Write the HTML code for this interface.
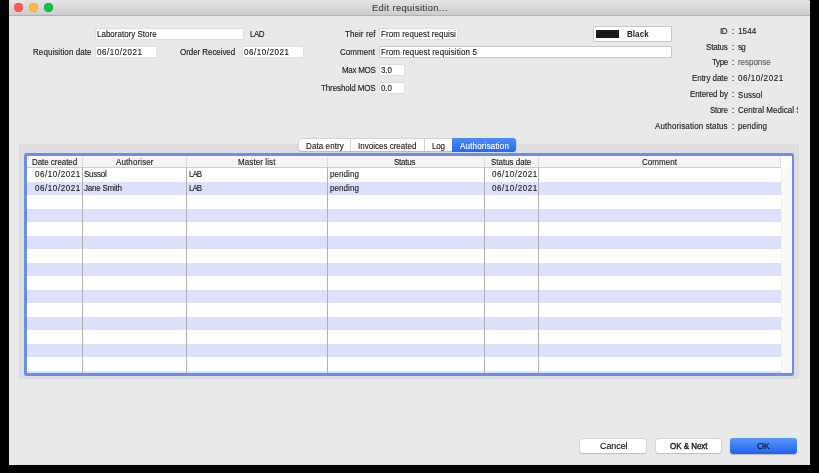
<!DOCTYPE html>
<html>
<head>
<meta charset="utf-8">
<title>Edit requisition...</title>
<style>
html,body{margin:0;padding:0;background:#000;}
body{width:819px;height:473px;overflow:hidden;position:relative;font-family:"Liberation Sans",sans-serif;}
.b{position:absolute;}
.t{position:absolute;white-space:nowrap;line-height:12px;transform:scaleY(1.09);-webkit-text-stroke:0.13px;will-change:transform;}
</style>
</head>
<body>
<div class="b" style="left:9.00px;top:0.00px;width:801.00px;height:465.00px;background:#e9e9e9;border-radius:0 1.5px 0 0;"></div>
<div class="b" style="left:9.00px;top:0.00px;width:801.00px;height:15.20px;background:linear-gradient(#e4e4e4,#cdcdcd);border-radius:0 1.5px 0 0;"></div>
<div class="b" style="left:9.00px;top:15.20px;width:801.00px;height:0.80px;background:#b1b1b1;"></div>
<div class="b" style="left:14.20px;top:3.20px;width:8.80px;height:8.80px;background:#fc5b57;border-radius:50%;box-shadow:inset 0 0 0 0.5px #e2443f;"></div>
<div class="b" style="left:29.30px;top:3.20px;width:8.80px;height:8.80px;background:#fdbc40;border-radius:50%;box-shadow:inset 0 0 0 0.5px #e0a028;"></div>
<div class="b" style="left:44.20px;top:3.20px;width:8.80px;height:8.80px;background:#0cc446;border-radius:50%;box-shadow:inset 0 0 0 0.5px #0aa838;"></div>
<span class="t" style="left:371.70px;top:2.08px;font-size:9.3px;letter-spacing:0.363px;color:#3d3d3d;transform-origin:0 9.22px;transform:scaleY(1.04);">Edit requisition...</span>
<div class="b" style="left:95.80px;top:29.10px;width:147.40px;height:9.80px;background:#fff;box-shadow:0 0 0 0.6px #d9d9d9;"></div>
<div class="b" style="left:95.80px;top:46.70px;width:60.20px;height:10.20px;background:#fff;box-shadow:0 0 0 0.6px #d9d9d9;"></div>
<div class="b" style="left:242.60px;top:46.70px;width:60.70px;height:10.20px;background:#fff;box-shadow:0 0 0 0.6px #d9d9d9;"></div>
<div class="b" style="left:379.90px;top:29.10px;width:77.30px;height:9.80px;background:#fff;box-shadow:0 0 0 0.6px #d9d9d9;"></div>
<div class="b" style="left:379.60px;top:46.90px;width:291.10px;height:10.30px;background:#fff;box-shadow:0 0 0 0.7px #b9b9b9;"></div>
<div class="b" style="left:379.90px;top:65.00px;width:24.30px;height:9.80px;background:#fff;box-shadow:0 0 0 0.6px #d9d9d9;"></div>
<div class="b" style="left:379.90px;top:83.00px;width:24.30px;height:9.70px;background:#fff;box-shadow:0 0 0 0.6px #d9d9d9;"></div>
<div class="b" style="left:593.70px;top:26.90px;width:77.00px;height:13.80px;background:#fff;box-shadow:0 0 0 0.7px #b9b9b9;"></div>
<div class="b" style="left:596.20px;top:30.10px;width:22.40px;height:7.70px;background:#1b1b1b;"></div>
<span class="t" style="left:96.80px;top:28.93px;font-size:8.0px;letter-spacing:0.000px;color:#1c1c1c;transform-origin:0 8.77px;">Laboratory Store</span>
<span class="t" style="left:250.40px;top:28.93px;font-size:8.0px;letter-spacing:-0.480px;color:#1c1c1c;transform-origin:0 8.77px;">LAD</span>
<span class="t" style="left:33.20px;top:46.93px;font-size:8.0px;letter-spacing:0.076px;color:#1c1c1c;transform-origin:0 8.77px;">Requisition date</span>
<span class="t" style="left:96.80px;top:46.93px;font-size:8.0px;letter-spacing:0.540px;color:#1c1c1c;transform-origin:0 8.77px;">06/10/2021</span>
<span class="t" style="left:180.20px;top:46.93px;font-size:8.0px;letter-spacing:-0.065px;color:#1c1c1c;transform-origin:0 8.77px;">Order Received</span>
<span class="t" style="left:244.00px;top:46.93px;font-size:8.0px;letter-spacing:0.551px;color:#1c1c1c;transform-origin:0 8.77px;">06/10/2021</span>
<span class="t" style="left:345.00px;top:28.93px;font-size:8.0px;letter-spacing:0.075px;color:#1c1c1c;transform-origin:0 8.77px;">Their ref</span>
<span class="t" style="left:381.30px;top:28.93px;font-size:8.0px;letter-spacing:0.076px;color:#1c1c1c;transform-origin:0 8.77px;">From request requisi</span>
<span class="t" style="left:340.30px;top:46.93px;font-size:8.0px;letter-spacing:0.070px;color:#1c1c1c;transform-origin:0 8.77px;">Comment</span>
<span class="t" style="left:381.30px;top:46.93px;font-size:8.0px;letter-spacing:0.119px;color:#1c1c1c;transform-origin:0 8.77px;">From request requisition 5</span>
<span class="t" style="left:341.60px;top:64.73px;font-size:8.0px;letter-spacing:-0.293px;color:#1c1c1c;transform-origin:0 8.77px;">Max MOS</span>
<span class="t" style="left:381.30px;top:64.73px;font-size:8.0px;letter-spacing:-0.110px;color:#1c1c1c;transform-origin:0 8.77px;">3.0</span>
<span class="t" style="left:320.70px;top:82.83px;font-size:8.0px;letter-spacing:-0.112px;color:#1c1c1c;transform-origin:0 8.77px;">Threshold MOS</span>
<span class="t" style="left:381.30px;top:82.83px;font-size:8.0px;letter-spacing:-0.110px;color:#1c1c1c;transform-origin:0 8.77px;">0.0</span>
<span class="t" style="left:627.40px;top:28.63px;font-size:8.0px;letter-spacing:0.060px;color:#1c1c1c;transform-origin:0 8.77px;font-weight:bold;transform:scaleY(1.07);-webkit-text-stroke:0px;">Black</span>
<span class="t" style="left:720.30px;top:26.23px;font-size:8.0px;letter-spacing:-0.400px;color:#1c1c1c;transform-origin:0 8.77px;">ID</span>
<span class="t" style="left:731.90px;top:26.23px;font-size:8.0px;letter-spacing:0.000px;color:#1c1c1c;transform-origin:0 8.77px;">:</span>
<span class="t" style="left:737.60px;top:26.23px;font-size:8.0px;letter-spacing:0.167px;color:#1c1c1c;transform-origin:0 8.77px;">1544</span>
<span class="t" style="left:706.20px;top:41.93px;font-size:8.0px;letter-spacing:-0.196px;color:#1c1c1c;transform-origin:0 8.77px;">Status</span>
<span class="t" style="left:731.90px;top:41.93px;font-size:8.0px;letter-spacing:0.000px;color:#1c1c1c;transform-origin:0 8.77px;">:</span>
<span class="t" style="left:737.60px;top:41.93px;font-size:8.0px;letter-spacing:-0.640px;color:#1c1c1c;transform-origin:0 8.77px;">sg</span>
<span class="t" style="left:711.70px;top:57.33px;font-size:8.0px;letter-spacing:-0.387px;color:#1c1c1c;transform-origin:0 8.77px;">Type</span>
<span class="t" style="left:731.90px;top:57.33px;font-size:8.0px;letter-spacing:0.000px;color:#1c1c1c;transform-origin:0 8.77px;">:</span>
<span class="t" style="left:737.60px;top:57.33px;font-size:8.0px;letter-spacing:-0.046px;color:#5e5e5e;transform-origin:0 8.77px;">response</span>
<span class="t" style="left:691.90px;top:73.33px;font-size:8.0px;letter-spacing:-0.053px;color:#1c1c1c;transform-origin:0 8.77px;">Entry date</span>
<span class="t" style="left:731.90px;top:73.33px;font-size:8.0px;letter-spacing:0.000px;color:#1c1c1c;transform-origin:0 8.77px;">:</span>
<span class="t" style="left:737.60px;top:73.33px;font-size:8.0px;letter-spacing:0.562px;color:#1c1c1c;transform-origin:0 8.77px;">06/10/2021</span>
<span class="t" style="left:690.00px;top:89.13px;font-size:8.0px;letter-spacing:-0.087px;color:#1c1c1c;transform-origin:0 8.77px;">Entered by</span>
<span class="t" style="left:731.90px;top:89.13px;font-size:8.0px;letter-spacing:0.000px;color:#1c1c1c;transform-origin:0 8.77px;">:</span>
<span class="t" style="left:737.60px;top:89.53px;font-size:8.0px;letter-spacing:0.060px;color:#1c1c1c;transform-origin:0 8.77px;">Sussol</span>
<span class="t" style="left:710.00px;top:105.03px;font-size:8.0px;letter-spacing:-0.305px;color:#1c1c1c;transform-origin:0 8.77px;">Store</span>
<span class="t" style="left:731.90px;top:105.03px;font-size:8.0px;letter-spacing:0.000px;color:#1c1c1c;transform-origin:0 8.77px;">:</span>
<span class="t" style="left:655.30px;top:120.83px;font-size:8.0px;letter-spacing:0.122px;color:#1c1c1c;transform-origin:0 8.77px;">Authorisation status</span>
<span class="t" style="left:731.90px;top:120.83px;font-size:8.0px;letter-spacing:0.000px;color:#1c1c1c;transform-origin:0 8.77px;">:</span>
<span class="t" style="left:737.60px;top:120.83px;font-size:8.0px;letter-spacing:0.087px;color:#1c1c1c;transform-origin:0 8.77px;">pending</span>
<div class="b" style="left:736px;top:100px;width:61.6px;height:20px;overflow:hidden;">
<span class="t" style="left:1.60px;top:5.43px;font-size:8px;letter-spacing:0.029px;color:#1c1c1c;transform-origin:0 8.77px;">Central Medical Store</span></div>
<div class="b" style="left:19.40px;top:144.00px;width:780.00px;height:234.50px;background:#dedede;border-radius:3px;box-shadow:inset 0 0 0 0.6px #d9d9d9;"></div>
<div class="b" style="left:298.90px;top:138.80px;width:216.80px;height:12.70px;background:#fff;border-radius:3px;box-shadow:0 0 0 0.5px #c2c2c2,0 0.5px 1px rgba(0,0,0,0.18);"></div>
<div class="b" style="left:452.20px;top:138.40px;width:63.80px;height:13.50px;background:linear-gradient(#4c8ff9,#2966f5);border-radius:0 3px 3px 0;"></div>
<div class="b" style="left:350.00px;top:138.80px;width:0.70px;height:12.70px;background:#d4d4d4;"></div>
<div class="b" style="left:424.20px;top:138.80px;width:0.70px;height:12.70px;background:#d4d4d4;"></div>
<span class="t" style="left:305.90px;top:140.93px;font-size:8.0px;letter-spacing:0.098px;color:#1c1c1c;transform-origin:0 8.77px;">Data entry</span>
<span class="t" style="left:357.90px;top:140.93px;font-size:8.0px;letter-spacing:0.011px;color:#1c1c1c;transform-origin:0 8.77px;">Invoices created</span>
<span class="t" style="left:432.20px;top:140.93px;font-size:8.0px;letter-spacing:-0.180px;color:#1c1c1c;transform-origin:0 8.77px;">Log</span>
<span class="t" style="left:459.50px;top:140.93px;font-size:8.0px;letter-spacing:0.185px;color:#fff;transform-origin:0 8.77px;">Authorisation</span>
<div class="b" style="left:24.10px;top:153.30px;width:769.80px;height:222.40px;background:#6c8fe5;border-radius:2.5px;"></div>
<div class="b" style="left:27.10px;top:156.10px;width:764.90px;height:216.80px;background:#fff;overflow:hidden;"><div class="b" style="left:0.00px;top:25.61px;width:753.80px;height:13.51px;background:#dde0fb;"></div><div class="b" style="left:0.00px;top:52.63px;width:753.80px;height:13.51px;background:#dde0fb;"></div><div class="b" style="left:0.00px;top:79.65px;width:753.80px;height:13.51px;background:#dde0fb;"></div><div class="b" style="left:0.00px;top:106.67px;width:753.80px;height:13.51px;background:#dde0fb;"></div><div class="b" style="left:0.00px;top:133.69px;width:753.80px;height:13.51px;background:#dde0fb;"></div><div class="b" style="left:0.00px;top:160.71px;width:753.80px;height:13.51px;background:#dde0fb;"></div><div class="b" style="left:0.00px;top:187.73px;width:753.80px;height:13.51px;background:#dde0fb;"></div><div class="b" style="left:0.00px;top:214.75px;width:753.80px;height:13.51px;background:#dde0fb;"></div><div class="b" style="left:0.00px;top:0.00px;width:764.90px;height:10.90px;background:#f5f5f5;"></div><div class="b" style="left:0.00px;top:10.90px;width:753.80px;height:0.70px;background:#cdcdcd;"></div><div class="b" style="left:753.80px;top:0.00px;width:11.10px;height:11.60px;background:#fff;"></div><div class="b" style="left:753.80px;top:11.60px;width:11.10px;height:205.20px;background:#fafafa;box-shadow:inset 0.6px 0 0 #ececec;"></div><div class="b" style="left:54.75px;top:11.20px;width:0.90px;height:205.60px;background:#b0b0b0;"></div><div class="b" style="left:54.80px;top:1.40px;width:0.80px;height:9.00px;background:#dcdcdc;"></div><div class="b" style="left:159.05px;top:11.20px;width:0.90px;height:205.60px;background:#b0b0b0;"></div><div class="b" style="left:159.10px;top:1.40px;width:0.80px;height:9.00px;background:#dcdcdc;"></div><div class="b" style="left:299.95px;top:11.20px;width:0.90px;height:205.60px;background:#b0b0b0;"></div><div class="b" style="left:300.00px;top:1.40px;width:0.80px;height:9.00px;background:#dcdcdc;"></div><div class="b" style="left:456.45px;top:11.20px;width:0.90px;height:205.60px;background:#b0b0b0;"></div><div class="b" style="left:456.50px;top:1.40px;width:0.80px;height:9.00px;background:#dcdcdc;"></div><div class="b" style="left:510.85px;top:11.20px;width:0.90px;height:205.60px;background:#b0b0b0;"></div><div class="b" style="left:510.90px;top:1.40px;width:0.80px;height:9.00px;background:#dcdcdc;"></div><div class="b" style="left:753.40px;top:1.40px;width:0.80px;height:9.00px;background:#dcdcdc;"></div></div>
<span class="t" style="left:31.90px;top:157.23px;font-size:8.0px;letter-spacing:-0.055px;color:#1c1c1c;transform-origin:0 8.77px;">Date created</span>
<span class="t" style="left:115.70px;top:157.23px;font-size:8.0px;letter-spacing:0.113px;color:#1c1c1c;transform-origin:0 8.77px;">Authoriser</span>
<span class="t" style="left:238.40px;top:157.23px;font-size:8.0px;letter-spacing:0.096px;color:#1c1c1c;transform-origin:0 8.77px;">Master list</span>
<span class="t" style="left:394.40px;top:157.23px;font-size:8.0px;letter-spacing:-0.236px;color:#1c1c1c;transform-origin:0 8.77px;">Status</span>
<span class="t" style="left:491.30px;top:157.23px;font-size:8.0px;letter-spacing:-0.018px;color:#1c1c1c;transform-origin:0 8.77px;">Status date</span>
<span class="t" style="left:642.10px;top:157.23px;font-size:8.0px;letter-spacing:0.070px;color:#1c1c1c;transform-origin:0 8.77px;">Comment</span>
<span class="t" style="left:35.10px;top:169.23px;font-size:8.0px;letter-spacing:0.573px;color:#1c1c1c;transform-origin:0 8.77px;">06/10/2021</span>
<span class="t" style="left:84.00px;top:169.23px;font-size:8.0px;letter-spacing:-0.240px;color:#1c1c1c;transform-origin:0 8.77px;">Sussol</span>
<span class="t" style="left:188.60px;top:169.23px;font-size:8.0px;letter-spacing:-0.960px;color:#1c1c1c;transform-origin:0 8.77px;">LAB</span>
<span class="t" style="left:329.70px;top:169.23px;font-size:8.0px;letter-spacing:0.070px;color:#1c1c1c;transform-origin:0 8.77px;">pending</span>
<span class="t" style="left:491.80px;top:169.23px;font-size:8.0px;letter-spacing:0.573px;color:#1c1c1c;transform-origin:0 8.77px;">06/10/2021</span>
<span class="t" style="left:35.10px;top:182.73px;font-size:8.0px;letter-spacing:0.573px;color:#1c1c1c;transform-origin:0 8.77px;">06/10/2021</span>
<span class="t" style="left:84.00px;top:182.73px;font-size:8.0px;letter-spacing:-0.238px;color:#1c1c1c;transform-origin:0 8.77px;">Jane Smith</span>
<span class="t" style="left:188.60px;top:182.73px;font-size:8.0px;letter-spacing:-0.960px;color:#1c1c1c;transform-origin:0 8.77px;">LAB</span>
<span class="t" style="left:329.70px;top:182.73px;font-size:8.0px;letter-spacing:0.070px;color:#1c1c1c;transform-origin:0 8.77px;">pending</span>
<span class="t" style="left:491.80px;top:182.73px;font-size:8.0px;letter-spacing:0.573px;color:#1c1c1c;transform-origin:0 8.77px;">06/10/2021</span>
<div class="b" style="left:580.30px;top:438.90px;width:66.00px;height:14.40px;background:#fff;border-radius:3px;box-shadow:0 0 0 0.5px #c6c6c6,0 0.6px 1px rgba(0,0,0,0.22);"></div>
<div class="b" style="left:655.50px;top:438.90px;width:65.90px;height:14.40px;background:#fff;border-radius:3px;box-shadow:0 0 0 0.5px #c6c6c6,0 0.6px 1px rgba(0,0,0,0.22);"></div>
<div class="b" style="left:730.00px;top:438.20px;width:67.00px;height:15.80px;background:linear-gradient(#5a98fa,#2160f4);border-radius:3px;box-shadow:0 0.5px 1px rgba(0,0,0,0.2);"></div>
<span class="t" style="left:599.70px;top:439.98px;font-size:9.0px;letter-spacing:-0.087px;color:#111;transform-origin:0 9.12px;transform:scaleY(1.08);">Cancel</span>
<span class="t" style="left:669.70px;top:441.13px;font-size:8.0px;letter-spacing:-0.038px;color:#111;transform-origin:0 8.77px;-webkit-text-stroke:0.3px;">OK &amp; Next</span>
<span class="t" style="left:756.70px;top:439.88px;font-size:9.0px;letter-spacing:-0.205px;color:#111;transform-origin:0 9.12px;transform:scaleY(1.08);">OK</span>
</body>
</html>
